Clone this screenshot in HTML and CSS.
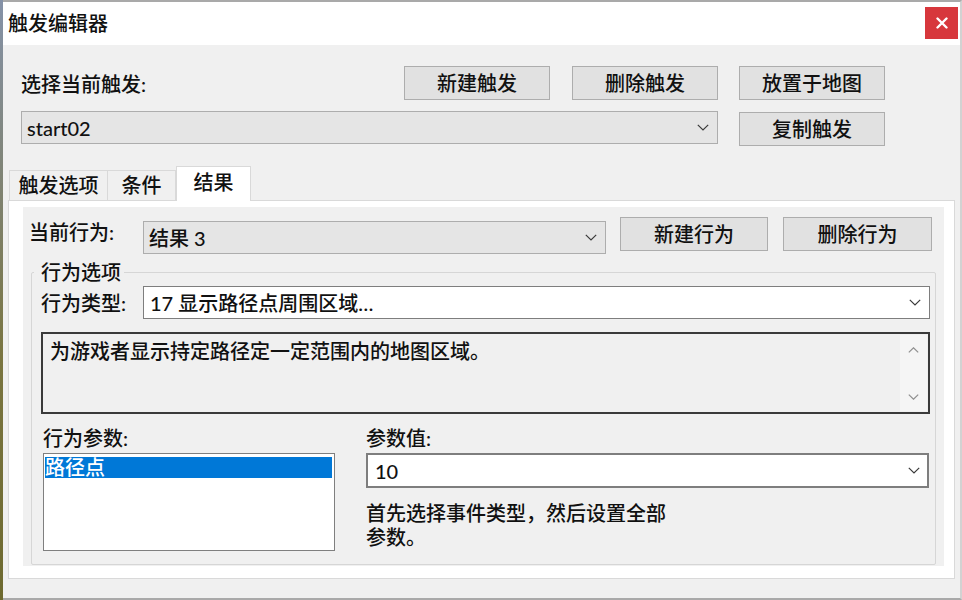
FILE: index.html
```html
<!DOCTYPE html>
<html lang="zh-CN">
<head>
<meta charset="utf-8">
<title>触发编辑器</title>
<link rel="stylesheet" href="styles.css">
</head>
<body>
<div class="window">
  <div class="titlebar">
    <span class="title">触发编辑器</span>
    <button class="close" aria-label="关闭">
      <svg width="12" height="12" viewBox="0 0 12 12"><path d="M1.5 1.5 L10.5 10.5 M10.5 1.5 L1.5 10.5" stroke="#fff" stroke-width="2.4" stroke-linecap="round"/></svg>
    </button>
  </div>
  <div class="client">
    <div class="top">
      <div class="top-left">
        <div class="row1">
          <span class="label">选择当前触发:</span>
          <button class="btn">新建触发</button>
          <button class="btn">删除触发</button>
        </div>
        <div class="combo gray trig">
          <span class="val">start02</span>
          <svg class="chev" viewBox="0 0 12 7"><path d="M0.8 0.8 L6 6 L11.2 0.8" fill="none" stroke="#3a3a3a" stroke-width="1.2"/></svg>
        </div>
      </div>
      <div class="top-right">
        <button class="btn">放置于地图</button>
        <button class="btn">复制触发</button>
      </div>
    </div>

    <div class="tabs">
      <div class="tab t1">触发选项</div>
      <div class="tab t2">条件</div>
      <div class="tab t3 active">结果</div>
    </div>

    <div class="panel">
      <div class="pane">
        <div class="action-row">
          <span class="alabel">当前行为:</span>
          <div class="combo gray act">
            <span class="val">结果 3</span>
            <svg class="chev" viewBox="0 0 12 7"><path d="M0.8 0.8 L6 6 L11.2 0.8" fill="none" stroke="#3a3a3a" stroke-width="1.2"/></svg>
          </div>
          <button class="btn b-new">新建行为</button>
          <button class="btn b-del">删除行为</button>
        </div>

        <fieldset class="group">
          <legend>行为选项</legend>
          <div class="type-row">
            <span class="tlabel">行为类型:</span>
            <div class="combo white type">
              <span class="val">17 显示路径点周围区域…</span>
              <svg class="chev" viewBox="0 0 12 7"><path d="M0.8 0.8 L6 6 L11.2 0.8" fill="none" stroke="#3a3a3a" stroke-width="1.2"/></svg>
            </div>
          </div>

          <div class="desc">
            <div class="desc-text">为游戏者显示持定路径定一定范围内的地图区域。</div>
            <div class="vscroll">
              <svg class="sarrow" viewBox="0 0 11 6"><path d="M0.8 5.4 L5.5 0.8 L10.2 5.4" fill="none" stroke="#8f8f8f" stroke-width="1.2"/></svg>
              <svg class="sarrow" viewBox="0 0 11 6"><path d="M0.8 0.6 L5.5 5.2 L10.2 0.6" fill="none" stroke="#8f8f8f" stroke-width="1.2"/></svg>
            </div>
          </div>

          <div class="params">
            <div class="pcol-left">
              <div class="plabel">行为参数:</div>
              <div class="listbox">
                <div class="item selected">路径点</div>
              </div>
            </div>
            <div class="pcol-right">
              <div class="plabel">参数值:</div>
              <div class="combo white focus">
                <span class="val">10</span>
                <svg class="chev" viewBox="0 0 12 7"><path d="M0.8 0.8 L6 6 L11.2 0.8" fill="none" stroke="#3a3a3a" stroke-width="1.2"/></svg>
              </div>
              <p class="hint">首先选择事件类型，然后设置全部参数。</p>
            </div>
          </div>
        </fieldset>
      </div>
    </div>
  </div>
</div>
</body>
</html>
```

FILE: styles.css
```css
* {
  box-sizing: border-box;
}

html, body {
  margin: 0;
  padding: 0;
}

body {
  width: 962px;
  height: 600px;
  overflow: hidden;
  background: linear-gradient(#8592a8, #7a7540 60%, #6e6a30);
  font-family: Lato, "Noto Sans CJK SC", sans-serif;
  font-size: 20px;
  font-weight: 500;
  color: #111;
}

.window {
  margin-left: 3px;
  width: 959px;
  height: 600px;
  background: #f0f0f0;
  border-top: 2px solid #a9a9a9;
  border-right: 2px solid #d2d2d2;
  border-bottom: 2px solid #a9a9a9;
  display: flex;
  flex-direction: column;
}

/* title bar */
.titlebar {
  flex: none;
  height: 43px;
  background: #fff;
  display: flex;
  justify-content: space-between;
  align-items: flex-start;
  padding-left: 5px;
}

.title {
  line-height: 43px;
}

.close {
  margin: 5px 2px 0 0;
  width: 33px;
  height: 32px;
  border: none;
  padding: 0;
  background: #d7373c;
  display: flex;
  align-items: center;
  justify-content: center;
}

/* client area */
.client {
  flex: 1;
  display: flex;
  flex-direction: column;
  padding-top: 21px;
}

.top {
  display: flex;
  gap: 21px;
  padding-left: 18px;
}

.top-left {
  width: 697px;
  display: flex;
  flex-direction: column;
  gap: 11px;
}

.row1 {
  display: flex;
  align-items: center;
  height: 34px;
}

.row1 .label {
  flex: 1;
}

.row1 .btn + .btn {
  margin-left: 22px;
}

.top-right {
  display: flex;
  flex-direction: column;
  gap: 12px;
}

.btn {
  font: inherit;
  color: inherit;
  width: 146px;
  height: 34px;
  padding: 0;
  background: #e1e1e1;
  border: 1px solid #adadad;
  line-height: 1;
}

/* combo boxes */
.combo {
  display: flex;
  align-items: center;
  border: 1px solid #adadad;
  padding: 0 8px 0 5px;
}

.combo .val {
  flex: 1;
  white-space: nowrap;
}

.combo.gray {
  background: #e5e5e5;
}

.combo.white {
  background: #fff;
  border-color: #7e7e7e;
}

.chev {
  width: 12px;
  height: 7px;
  flex: none;
}

.trig {
  height: 33px;
}

/* tabs */
.tabs {
  display: flex;
  align-items: flex-end;
  height: 34px;
  margin: 20px 0 0 6px;
}

.tab {
  height: 30px;
  line-height: 28px;
  background: #f0f0f0;
  border: 1px solid #d9d9d9;
  border-bottom: none;
  text-align: center;
}

.t1 {
  width: 99px;
}

.t2 {
  width: 68px;
  border-left: none;
}

.t3 {
  width: 75px;
}

.tab.active {
  height: 35px;
  line-height: 30px;
  margin-bottom: -1px;
  background: #fff;
  position: relative;
  z-index: 1;
}

/* panel */
.panel {
  margin-left: 5px;
  width: 947px;
  height: 379px;
  background: #fff;
  border: 1px solid #d9d9d9;
  padding: 6px 10px 12px 14px;
}

.pane {
  height: 100%;
  background: #f0f0f0;
  padding: 10px 0 0 6px;
}

.action-row {
  display: flex;
  align-items: flex-start;
}

.alabel {
  width: 114px;
  line-height: 30px;
}

.act {
  width: 463px;
  height: 33px;
  margin-top: 4px;
}

.b-new {
  width: 148px;
  margin-left: 14px;
}

.b-del {
  width: 149px;
  margin-left: 15px;
}

/* group box */
.group {
  margin: 7px 0 0 2px;
  width: 905px;
  min-width: 0;
  border: 1px solid #d6d6d6;
  border-radius: 2px;
  padding: 3px 5px 13px 9px;
}

.group legend {
  line-height: 22px;
  padding: 0 3px 0 7px;
  margin-left: -7px;
}

.type-row {
  display: flex;
  height: 33px;
  align-items: center;
}

.tlabel {
  width: 102px;
}

.type {
  flex: 1;
  height: 33px;
  padding-left: 6px;
}

.desc {
  margin-top: 13px;
  height: 82px;
  border: 2px solid #3a3a3a;
  background: #f0f0f0;
  display: flex;
}

.desc-text {
  flex: 1;
  padding: 5px 7px;
  line-height: 24px;
}

.vscroll {
  width: 27px;
  margin: 1px 1px 1px 0;
  background: #f5f5f5;
  display: flex;
  flex-direction: column;
  justify-content: space-between;
  align-items: center;
  padding: 12px 0 11px;
}

.sarrow {
  width: 11px;
  height: 6px;
}

/* parameters */
.params {
  margin-top: 12px;
  display: flex;
}

.pcol-left {
  margin-left: 2px;
  width: 292px;
}

.pcol-right {
  margin-left: 31px;
  width: 563px;
}

.plabel {
  height: 27px;
  line-height: 24px;
}

.listbox {
  height: 98px;
  background: #fff;
  border: 1px solid #7f7f7f;
  padding: 3px 2px 0 1px;
}

.item {
  height: 21px;
  line-height: 21px;
}

.item.selected {
  background: #0078d7;
  color: #fff;
}

.focus {
  height: 35px;
  border: 2px solid #4a9ce8;
  padding-left: 7px;
  padding-right: 7px;
}

.hint {
  margin: 13px 0 0;
  width: 305px;
  line-height: 24px;
}
```
